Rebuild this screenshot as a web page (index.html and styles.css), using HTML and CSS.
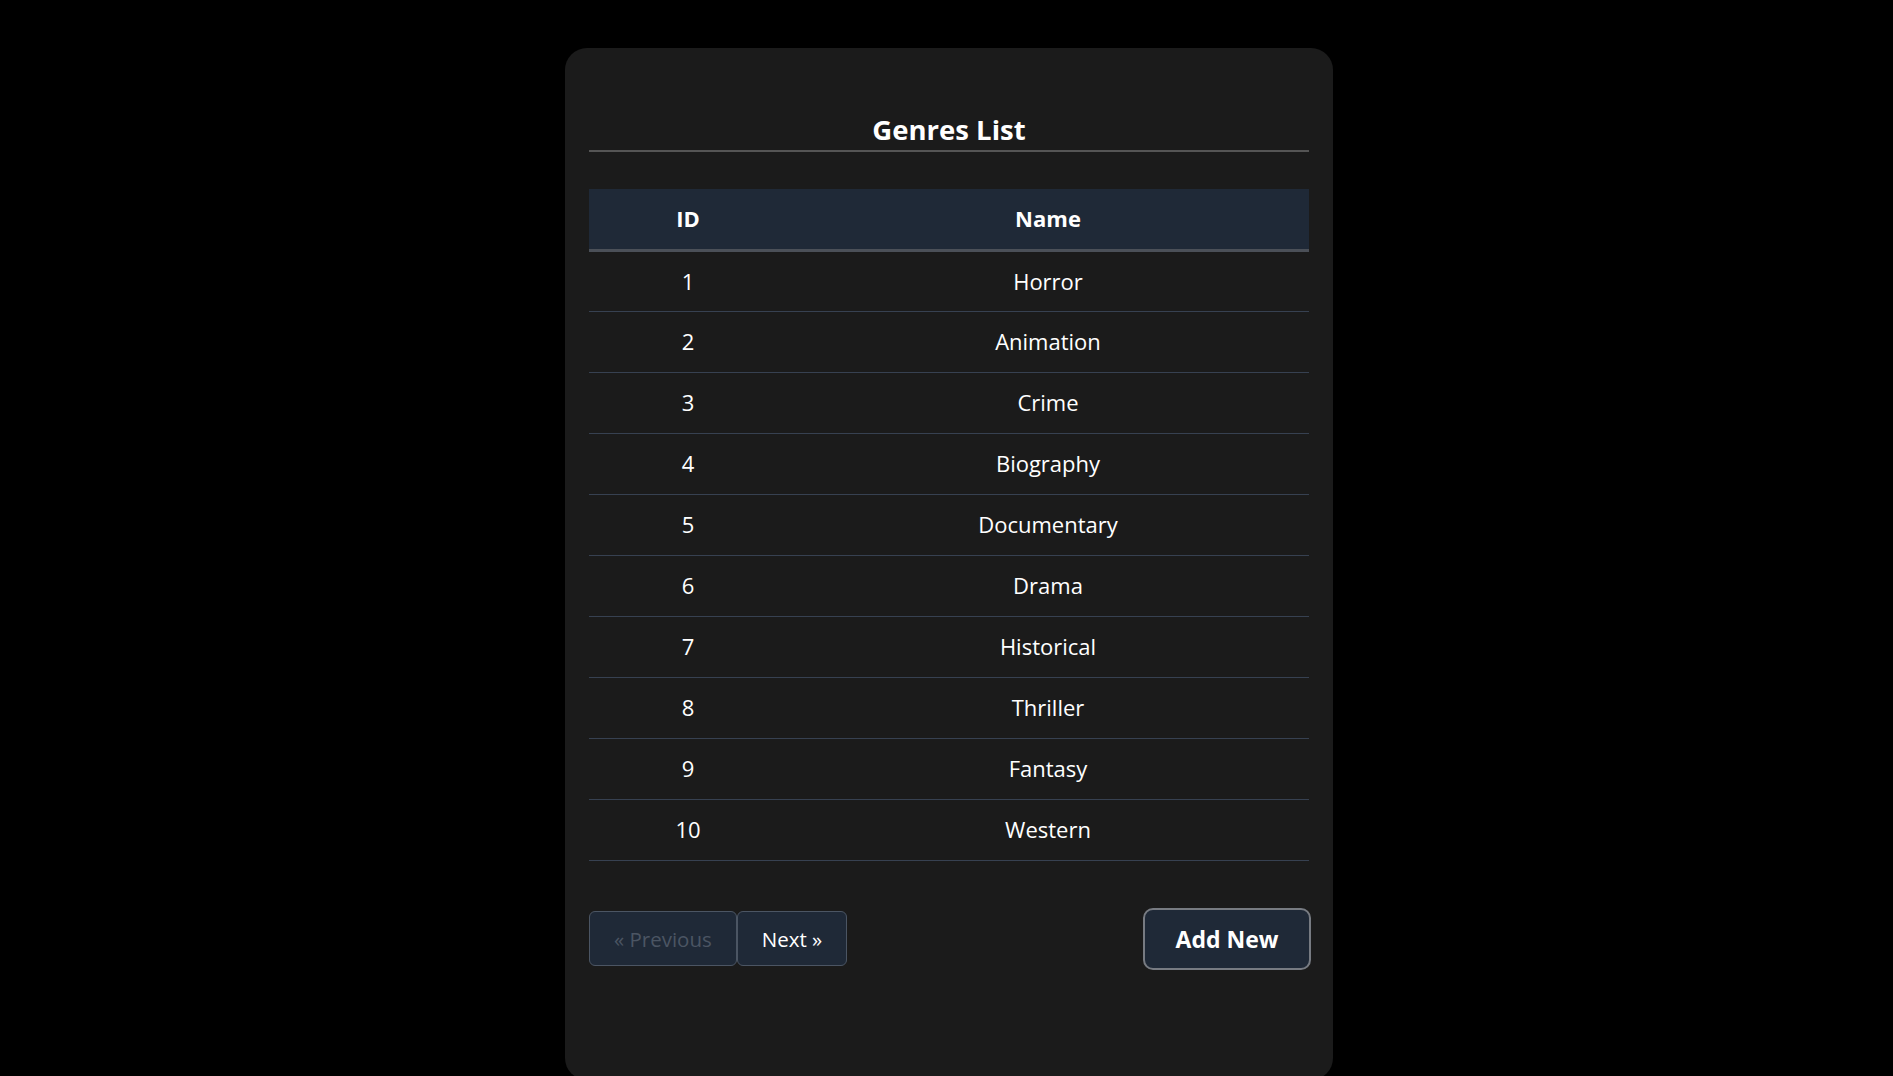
FILE: index.html
```html
<!DOCTYPE html>
<html lang="en-US">
<head>
    <title>Genres List</title>

    <link rel="stylesheet" href="styles.css">
</head>
<body>

    <div class="site">
        <div class="card">
            <h2 class="card__title">Genres List</h2>

            <table class="genres">
                <thead>
                    <tr>
                        <th class="genres__id">ID</th>
                        <th>Name</th>
                    </tr>
                </thead>
                <tbody>
                    <tr><td class="genres__id">1</td><td>Horror</td></tr>
                    <tr><td class="genres__id">2</td><td>Animation</td></tr>
                    <tr><td class="genres__id">3</td><td>Crime</td></tr>
                    <tr><td class="genres__id">4</td><td>Biography</td></tr>
                    <tr><td class="genres__id">5</td><td>Documentary</td></tr>
                    <tr><td class="genres__id">6</td><td>Drama</td></tr>
                    <tr><td class="genres__id">7</td><td>Historical</td></tr>
                    <tr><td class="genres__id">8</td><td>Thriller</td></tr>
                    <tr><td class="genres__id">9</td><td>Fantasy</td></tr>
                    <tr><td class="genres__id">10</td><td>Western</td></tr>
                </tbody>
            </table>

            <div class="card__footer">
                <div class="pager">
                    <button class="pager__btn" disabled>&laquo; Previous</button>
                    <button class="pager__btn">Next &raquo;</button>
                </div>
                <button class="btn-add">Add New</button>
            </div>
        </div>
    </div>

</body>
</html>
```

FILE: styles.css
```css
* {
    box-sizing: border-box;
}

body {
    background-color: #000;
    color: #fff;
    margin: 0;
    padding: 0;
    font-family: "Open Sans", "Noto Sans", sans-serif;
    font-size: 22px;
    line-height: 1.5;
}

.site {
    display: flex;
    justify-content: center;
    padding: 48px 0 0 5px;
}

.card {
    background-color: #1b1b1b;
    width: 768px;
    height: 1032px;
    padding: 24px;
    border-radius: 22px;
}

.card__title {
    margin: 40px 0 0;
    padding-bottom: 3px;
    font-size: 27.5px;
    font-weight: bold;
    line-height: 1.28;
    text-align: center;
    border-bottom: 2px solid #555;
}

.genres {
    width: 100%;
    margin-top: 37px;
    border-collapse: collapse;
}

.genres th,
.genres td {
    text-align: center;
    padding: 0;
}

.genres th {
    background-color: #1f2937;
    height: 61px;
    font-weight: bold;
    border-bottom: 3px solid #4b5058;
}

.genres td {
    height: 61px;
    border-bottom: 1px solid #374151;
}

.genres__id {
    width: 198px;
}

.card__footer {
    display: flex;
    justify-content: space-between;
    align-items: center;
    margin-top: 47px;
    margin-right: -2px;
}

.pager {
    display: flex;
}

.pager__btn {
    font-family: inherit;
    font-size: 20.5px;
    color: #fff;
    background-color: #1f2937;
    border: 1px solid #4b5563;
    border-radius: 6px;
    height: 55px;
    padding: 0 24px;
    cursor: pointer;
}

.pager__btn:disabled {
    color: #4b5563;
    cursor: auto;
}

.btn-add {
    font-family: inherit;
    font-size: 23px;
    font-weight: bold;
    color: #fff;
    background-color: #1f2937;
    border: 2px solid #777b82;
    border-radius: 10px;
    height: 62px;
    width: 168px;
    cursor: pointer;
}
```
